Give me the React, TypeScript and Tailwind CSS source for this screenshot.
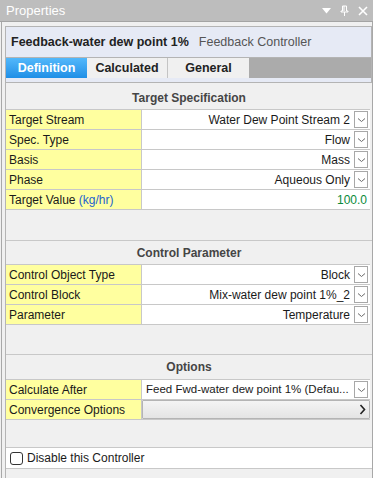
import React from 'react';

const Chevron = () => (
  <div className="w-[14px] h-[17px] border border-[#a8a8a8] bg-white flex items-center justify-center shrink-0">
    <svg width="9" height="6" viewBox="0 0 9 6">
      <path d="M1 1.5 L4.5 4.5 L8 1.5" fill="none" stroke="#6a6a6a" strokeWidth="1" />
    </svg>
  </div>
);

type Row = { label: React.ReactNode; value?: string; kind?: 'select' | 'number' | 'left' | 'button' };

const Rows = ({ rows }: { rows: Row[] }) => (
  <div className="border-b border-[#c8c8c8] mr-[2px]">
    {rows.map((r, i) => (
      <div key={i} className="h-[20px] flex border-t border-[#c8c8c8]">
        <div className="w-[136px] shrink-0 bg-[#ffff9f] border-r border-[#c8c8c8] flex items-center pl-[3px] text-[#1a1a1a]">
          {r.label}
        </div>
        {r.kind === 'button' ? (
          <div className="flex-1 flex items-center justify-end pr-[3px] bg-gradient-to-b from-[#f4f4f4] to-[#e4e4e4] border border-[#b4b4b4] rounded-[1px]">
            <svg width="7" height="11" viewBox="0 0 7 11">
              <path d="M1.5 1 L5.5 5.5 L1.5 10" fill="none" stroke="#222" strokeWidth="1.6" />
            </svg>
          </div>
        ) : r.kind === 'number' ? (
          <div className="flex-1 bg-white flex items-center justify-end pr-[3px] text-[#0a8a3a]">{r.value}</div>
        ) : r.kind === 'left' ? (
          <div className="flex-1 min-w-0 bg-white flex items-center pl-[4px] pr-[2px] gap-[1px] text-[#1a1a1a]">
            <span className="flex-1 min-w-0 whitespace-nowrap text-[11.5px]">{r.value}</span>
            <Chevron />
          </div>
        ) : (
          <div className="flex-1 bg-white flex items-center justify-end pr-[2px] gap-[4px] text-[#1a1a1a]">
            <span className="whitespace-nowrap">{r.value}</span>
            <Chevron />
          </div>
        )}
      </div>
    ))}
  </div>
);

const SectionHead = ({ title, h, top }: { title: string; h: string; top?: boolean }) => (
  <div className={`${h} flex items-center justify-center font-bold text-[#454545] ${top ? '' : 'border-t border-[#c8c8c8]'}`}>
    {title}
  </div>
);

export default function App() {
  return (
    <div className="w-[373px] h-[478px] bg-[#f0f0f0] overflow-hidden text-[12px] font-['Liberation_Sans',Arial,sans-serif] flex flex-col">
      {/* title bar */}
      <div className="h-[22px] bg-[#bdbdbd] border-b border-[#a4a4a4] flex items-center pl-[6px] pr-[5px] text-white text-[13px] shrink-0">
        <span className="flex-1">Properties</span>
        <div className="flex items-center gap-[9px]">
          <svg width="9" height="6" viewBox="0 0 9 6"><path d="M0 0 H9 L4.5 5.5 Z" fill="#fff" /></svg>
          <svg width="9" height="11" viewBox="0 0 9 11">
            <path d="M2.5 1 H6.5 V6 H8 V7 H1 V6 H2.5 Z M4 1 V6 M4.5 7 V11" fill="none" stroke="#fff" strokeWidth="1" />
          </svg>
          <svg width="10" height="10" viewBox="0 0 10 10">
            <path d="M1 1 L9 9 M9 1 L1 9" stroke="#fff" strokeWidth="1.6" />
          </svg>
        </div>
      </div>

      <div className="flex-1 border-x border-[#a8a8a8] ml-[1px] pl-[3px] pt-[4px] flex flex-col">
        {/* object header */}
        <div className="h-[32px] bg-[#e6eaf5] border border-[#b4b4b4] flex items-center pl-[5px] gap-[10px]">
          <span className="font-bold text-[12.5px] text-[#222]">Feedback-water dew point 1%</span>
          <span className="text-[12.5px] text-[#555]">Feedback Controller</span>
        </div>

        {/* tabs */}
        <div className="h-[20px] flex bg-[#ababab] border-x border-[#b4b4b4]">
          <div className="w-[81px] bg-gradient-to-b from-[#52b8fb] to-[#1e8fe6] text-white font-bold text-[12.5px] flex items-center justify-center">Definition</div>
          <div className="w-[81px] bg-[#f0f0f0] border-r border-[#c4c4c4] text-[#222] font-bold text-[12.5px] flex items-center justify-center">Calculated</div>
          <div className="w-[81px] bg-[#f0f0f0] text-[#222] font-bold text-[12.5px] flex items-center justify-center">General</div>
        </div>
        <div className="h-[5px] bg-[#e6eaf5] border-x border-b border-[#b4b4b4]"></div>

        {/* content */}
        <div className="flex-1 border-l border-[#b4b4b4] pt-[3px]">
          <SectionHead title="Target Specification" h="h-[23px]" top />
          <Rows
            rows={[
              { label: 'Target Stream', value: 'Water Dew Point Stream 2' },
              { label: 'Spec. Type', value: 'Flow' },
              { label: 'Basis', value: 'Mass' },
              { label: 'Phase', value: 'Aqueous Only' },
              {
                label: (
                  <span>
                    Target Value <span className="text-[#1d63d0]">(kg/hr)</span>
                  </span>
                ),
                value: '100.0',
                kind: 'number',
              },
            ]}
          />
          <div className="h-[30px]"></div>
          <SectionHead title="Control Parameter" h="h-[24px]" />
          <Rows
            rows={[
              { label: 'Control Object Type', value: 'Block' },
              { label: 'Control Block', value: 'Mix-water dew point 1%_2' },
              { label: 'Parameter', value: 'Temperature' },
            ]}
          />
          <div className="h-[29px]"></div>
          <SectionHead title="Options" h="h-[25px]" />
          <Rows
            rows={[
              { label: 'Calculate After', value: 'Feed Fwd-water dew point 1% (Defau...', kind: 'left' },
              { label: 'Convergence Options', kind: 'button' },
            ]}
          />
          <div className="h-[27px]"></div>
          <div className="h-[22px] bg-white border-y border-[#c8c8c8] flex items-center pl-[4px] gap-[4px] text-[#1a1a1a]">
            <div className="w-[13px] h-[13px] rounded-[3px] border border-[#333] bg-white"></div>
            <span>Disable this Controller</span>
          </div>
        </div>
      </div>
    </div>
  );
}
